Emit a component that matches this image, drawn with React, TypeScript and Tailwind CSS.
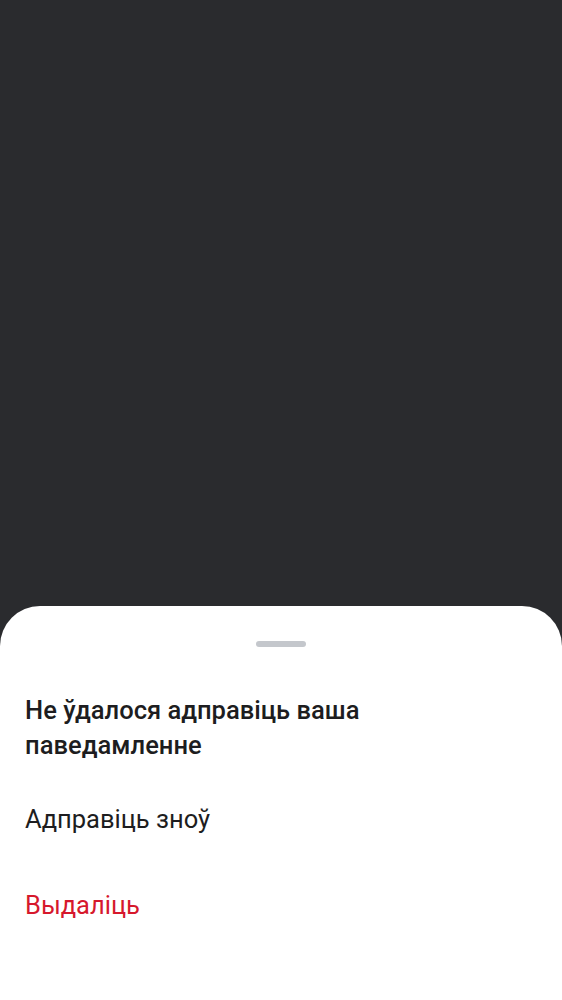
import React from "react";

export default function App() {
  return (
    <div
      className="w-[562px] h-[1000px] bg-[#2a2b2e] flex flex-col justify-end overflow-hidden"
      style={{ fontFamily: "Roboto, 'Noto Sans', sans-serif" }}
    >
      <div className="h-[394px] bg-white rounded-t-[40px] flex flex-col">
        <div className="flex justify-center pt-[35px]">
          <div className="w-[50px] h-[6px] rounded-full bg-[#c4c7cc]" />
        </div>
        <div className="px-[25px] pt-[46px]">
          <h2
            className="text-[25.5px] leading-[35px] font-medium text-[#1d1d20] w-[420px]"
            style={{ fontFamily: "'Roboto Medium', Roboto, 'Noto Sans', sans-serif" }}
          >
            Не ўдалося адправіць ваша паведамленне
          </h2>
        </div>
        <div className="px-[25px] pt-[39px] text-[25.5px] leading-[35px] text-[#1d1d20]">
          Адправіць зноў
        </div>
        <div className="px-[25px] pt-[51px] text-[25.5px] leading-[35px] text-[#d6182c]">
          Выдаліць
        </div>
      </div>
    </div>
  );
}
